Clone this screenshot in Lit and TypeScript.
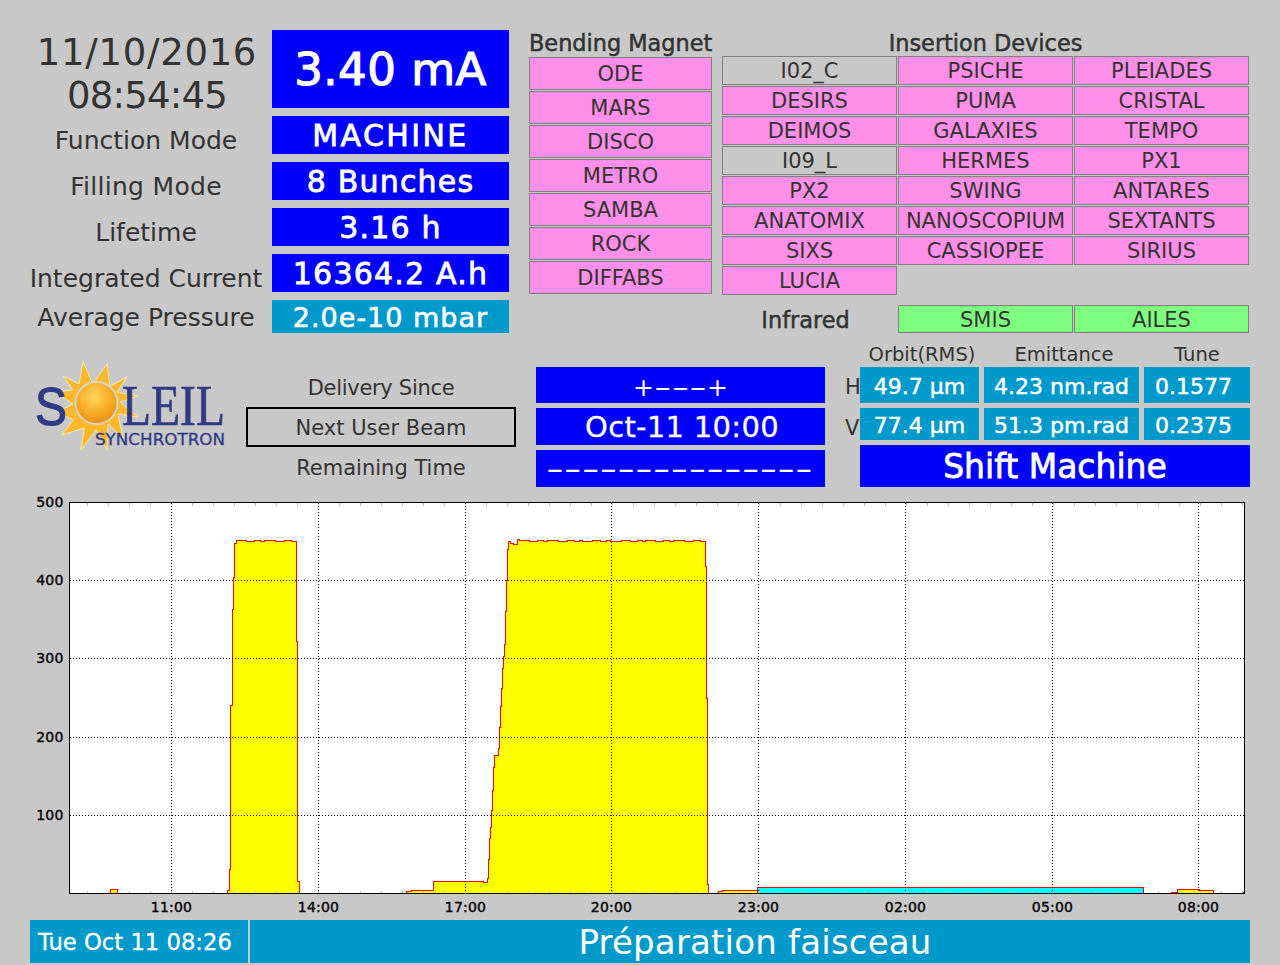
import { LitElement, html, svg, css } from 'lit';
import { customElement } from 'lit/decorators.js';

// Beamline buttons, column by column
const BENDING = ['ODE', 'MARS', 'DISCO', 'METRO', 'SAMBA', 'ROCK', 'DIFFABS'];
const INSERTION = [
  'I02_C', 'PSICHE', 'PLEIADES',
  'DESIRS', 'PUMA', 'CRISTAL',
  'DEIMOS', 'GALAXIES', 'TEMPO',
  'I09_L', 'HERMES', 'PX1',
  'PX2', 'SWING', 'ANTARES',
  'ANATOMIX', 'NANOSCOPIUM', 'SEXTANTS',
  'SIXS', 'CASSIOPEE', 'SIRIUS',
  'LUCIA',
];
const CLOSED = ['I02_C', 'I09_L'];

// Chart geometry, in page pixels
const PLOT = { left: 69.5, right: 1244.5, top: 502.5, bottom: 893.5 };
const Y_TICKS = [
  { label: '500', y: 502 },
  { label: '400', y: 580 },
  { label: '300', y: 658 },
  { label: '200', y: 737 },
  { label: '100', y: 815 },
];
const X_TICKS = [
  { label: '11:00', x: 171.5 },
  { label: '14:00', x: 318.5 },
  { label: '17:00', x: 465.5 },
  { label: '20:00', x: 611.5 },
  { label: '23:00', x: 758.5 },
  { label: '02:00', x: 905.5 },
  { label: '05:00', x: 1052.5 },
  { label: '08:00', x: 1198.5 },
];

// Stepped current trace: [x, y] after each step
type Step = [number, number];

// Full-current plateaus wobble by a pixel
function plateau(from: number, to: number): Step[] {
  const steps: Step[] = [];
  let i = 0;
  for (let x = from; x < to; x += 3 + (i * 7) % 9) {
    steps.push([x, i % 2 === 0 ? 540.5 : 541.5]);
    i++;
  }
  return steps;
}

const YELLOW: Step[][] = [
  [[110.5, 889.5], [117.5, 893.5]],
  [[227.5, 890.5], [229.5, 869.5], [230.5, 705.5], [232.5, 609.5], [233.5, 577.5], [234.5, 543.5],
    ...plateau(236.5, 295), [296.5, 542.5], [296.5, 641.5], [297.5, 881.5], [299.5, 893.5]],
  [[406.5, 891.5], [411.5, 890.5], [433.5, 881.5], [483.5, 882.5], [487.5, 878.5], [488.5, 859.5], [489.5, 838.5],
    [490.5, 827.5], [491.5, 810.5], [492.5, 790.5], [493.5, 767.5], [494.5, 755.5], [498.5, 748.5],
    [499.5, 727.5], [500.5, 706.5], [501.5, 688.5], [502.5, 668.5], [503.5, 656.5], [504.5, 644.5],
    [505.5, 611.5], [506.5, 580.5], [507.5, 549.5], [508.5, 541.5], [510.5, 543.5], [513.5, 544.5],
    [517.5, 539.5], ...plateau(519.5, 705), [705.5, 566.5], [706.5, 698.5], [707.5, 884.5], [708.5, 893.5]],
  [[718.5, 891.5], [722.5, 890.5], [757.5, 893.5]],
  [[1171.5, 892.5], [1177.5, 889.5], [1199.5, 890.5], [1213.5, 893.5]],
  [[1242.5, 892.5], [1244.5, 893.5]],
];
const CYAN: Step[] = [[757.5, 887.5], [1143.5, 893.5]];

// The last step of each trace drops back to the baseline
function tracePoints(steps: Step[]): string {
  const base = PLOT.bottom;
  let pts = `${steps[0][0]},${base}`;
  let y = base;
  for (const [sx, sy] of steps) {
    pts += ` ${sx},${y} ${sx},${sy}`;
    y = sy;
  }
  return pts;
}

const RAYS =
  '83,362 93,384 107,364 110,386 127,377 117,392 138,396 120,402 138,417 118,414 123,438 108,424 107,450 96,430 ' +
  '81,450 84,428 62,435 73,420 58,412 73,404 55,392 73,390 63,376 79,384';

@customElement('app-root')
export class AppRoot extends LitElement {
  static styles = css`
    :host {
      display: block;
      width: 1280px;
      height: 965px;
      background: #c8c8c8;
      color: #333333;
      font-family: 'DejaVu Sans', sans-serif;
      overflow: hidden;
    }

    .top {
      display: flex;
      padding: 30px 0 0 30px;
    }

    .status {
      display: grid;
      grid-template-columns: 232px 237px;
      grid-template-rows: 78px repeat(4, 38px) 33px;
      gap: 8px 10px;
      font-size: 25px;
      text-align: center;
    }

    .clock {
      font-size: 37px;
      line-height: 43px;
      padding: 1px 0 0 2px;
      white-space: nowrap;
    }

    .date {
      display: block;
      letter-spacing: 0.7px;
    }

    .hour {
      display: block;
      letter-spacing: -0.8px;
    }

    .label {
      display: flex;
      align-items: center;
      justify-content: center;
      padding-top: 10px;
      height: 38px;
      box-sizing: border-box;
      white-space: nowrap;
    }

    .label.last {
      padding-top: 2px;
      height: 33px;
    }

    .label.spaced {
      letter-spacing: 0.3px;
    }

    .value {
      display: flex;
      align-items: center;
      justify-content: center;
      background: #0000ff;
      color: #ffffff;
      white-space: nowrap;
    }

    .teal {
      background: #0099cc;
    }

    .current {
      font-size: 45px;
      -webkit-text-stroke: 1.2px #ffffff;
      letter-spacing: 0.5px;
    }

    .big {
      font-size: 30px;
      -webkit-text-stroke: 0.8px #ffffff;
      letter-spacing: 1.2px;
    }

    .big.wide {
      letter-spacing: 2.4px;
    }

    .pressure {
      font-size: 27px;
      -webkit-text-stroke: 0.6px #ffffff;
      letter-spacing: 1px;
      padding-top: 2px;
    }

    .bending {
      width: 183px;
      margin-left: 20px;
      display: flex;
      flex-direction: column;
      gap: 1px;
    }

    .heading {
      font-size: 22.4px;
      -webkit-text-stroke: 0.5px #333333;
      text-align: center;
      line-height: 27px;
      white-space: nowrap;
    }

    .bending .heading {
      height: 26px;
    }

    .bending .beam {
      height: 33px;
    }

    .insertion {
      margin-left: 10px;
      display: grid;
      grid-template-columns: repeat(3, 175px);
      grid-template-rows: 25px repeat(8, 29px) 37px;
      column-gap: 1px;
      row-gap: 1px;
    }

    .insertion .heading {
      grid-column: 1 / 4;
    }

    .infrared {
      font-size: 22.4px;
      -webkit-text-stroke: 0.5px #333333;
      text-align: center;
      padding-right: 8px;
      margin-top: 10px;
      line-height: 28px;
    }

    .insertion .ir {
      margin-top: 9px;
      padding-top: 2px;
    }

    .beam {
      display: flex;
      align-items: center;
      justify-content: center;
      box-sizing: border-box;
      border: 1px solid #808080;
      background: #ff8fe8;
      font-size: 21px;
      white-space: nowrap;
    }

    .beam.closed {
      background: #c8c8c8;
    }

    .beam.ir {
      background: #7fff7f;
    }

    .middle {
      display: flex;
      height: 142px;
      margin-top: 12px;
    }

    .logo {
      display: block;
      width: 246px;
      height: 142px;
      flex: none;
    }

    .delivery {
      width: 270px;
      padding-top: 22px;
      display: grid;
      grid-template-rows: 40px 40px 40px;
      font-size: 21px;
      text-align: center;
      white-space: nowrap;
    }

    .delivery div {
      display: flex;
      align-items: center;
      justify-content: center;
      padding-top: 2px;
    }

    .delivery .since {
      letter-spacing: -0.3px;
    }

    .delivery .boxed {
      box-sizing: border-box;
      border: 2px solid #000000;
    }

    .beam-times {
      width: 289px;
      margin-left: 20px;
      padding-top: 22px;
      display: grid;
      grid-template-rows: 36px 37px 37px;
      row-gap: 5px;
    }

    .time {
      font-size: 29px;
      -webkit-text-stroke: 0.3px #ffffff;
      letter-spacing: 0.3px;
      padding-left: 3px;
    }

    .dashes {
      font-size: 29px;
      padding-right: 3px;
    }

    .dashes span {
      display: inline-block;
      transform: scaleX(1.7);
    }

    .plus-row {
      font-size: 25px;
      padding-top: 4px;
    }

    .plus-row span {
      display: inline-block;
      width: 53px;
      transform: scaleX(1.95);
      text-align: center;
    }

    .orbit {
      margin-left: 20px;
      display: grid;
      grid-template-columns: 10px 119px 155px 106px;
      grid-template-rows: 17px 36px 32px 42px;
      column-gap: 5px;
      row-gap: 5px;
      font-size: 19.5px;
    }

    .orbit .caption {
      text-align: center;
      line-height: 20px;
      white-space: nowrap;
    }

    .orbit .caption.shifted {
      padding-left: 5px;
    }

    .orbit .plane {
      line-height: 40px;
      font-size: 21px;
    }

    .measure {
      font-size: 22px;
      -webkit-text-stroke: 0.5px #ffffff;
      padding-top: 2px;
    }

    .measure.tune {
      justify-content: flex-start;
      padding-left: 11px;
    }

    .shift {
      grid-column: 2 / 5;
      font-size: 33px;
      -webkit-text-stroke: 0.8px #ffffff;
    }

    .chart {
      display: block;
      width: 1280px;
      height: 420px;
      margin-top: 8px;
    }

    .chart text {
      font-size: 14px;
      letter-spacing: 0.2px;
      fill: #000000;
      stroke: #000000;
      stroke-width: 0.35px;
    }

    .footer {
      display: flex;
      gap: 2px;
      height: 43px;
      margin: 5px 30px 0;
    }

    .footer .stamp {
      width: 218px;
      box-sizing: border-box;
      justify-content: flex-start;
      padding-left: 8px;
      font-size: 22.7px;
      -webkit-text-stroke: 0.3px #ffffff;
      background: #0099cc;
    }

    .footer .message {
      flex: 1;
      padding-left: 10px;
      font-size: 34px;
      letter-spacing: 0.2px;
      background: #0099cc;
    }
  `;

  private renderLogo() {
    return html`
      <svg class="logo" viewBox="0 345 246 142">
        <defs>
          <radialGradient id="sun" cx="0.45" cy="0.35" r="0.7">
            <stop offset="0" stop-color="#ffd75a"></stop>
            <stop offset="0.6" stop-color="#f7a823"></stop>
            <stop offset="1" stop-color="#e68a14"></stop>
          </radialGradient>
        </defs>
        <polygon points=${RAYS} fill="#f9b92e" stroke="#fbe6a2" stroke-width="1"></polygon>
        <circle cx="96.5" cy="403" r="21" fill="url(#sun)" stroke="#d6d3c6" stroke-width="2"></circle>
        <text x="35" y="425" font-family="Liberation Sans, sans-serif" font-size="54" fill="#2f3c85" stroke="#2f3c85"
          stroke-width="1.2" textLength="32" lengthAdjust="spacingAndGlyphs">S</text>
        <text x="122" y="425" font-family="Liberation Serif, serif" font-size="56" fill="#2f3c85" stroke="#2f3c85"
          stroke-width="0.7" textLength="103" lengthAdjust="spacingAndGlyphs">LEIL</text>
        <text x="95" y="445" font-family="DejaVu Sans, sans-serif" font-size="16" fill="#2f3c85" stroke="#2f3c85"
          stroke-width="0.3" textLength="130" lengthAdjust="spacingAndGlyphs">SYNCHROTRON</text>
      </svg>
    `;
  }

  private renderChart() {
    const minor: number[] = [];
    for (let x = 87; x < PLOT.right; x += 21) {
      minor.push(x + 0.5);
    }
    return html`
      <svg class="chart" viewBox="0 495 1280 420" shape-rendering="crispEdges">
        <rect x=${PLOT.left} y=${PLOT.top} width=${PLOT.right - PLOT.left} height=${PLOT.bottom - PLOT.top} fill="#ffffff"></rect>
        ${YELLOW.map(
          (steps) => svg`<polygon points=${tracePoints(steps)} fill="#ffff00" stroke="#ff0000" stroke-width="1"></polygon>`
        )}
        <polygon points=${tracePoints(CYAN)} fill="#00ffff" stroke="#ff0000" stroke-width="1"></polygon>
        ${minor.map(
          (x) => svg`
            <line x1=${x} x2=${x} y1=${PLOT.top} y2=${PLOT.top + 3} stroke="#c0c0c0"></line>
            <line x1=${x} x2=${x} y1=${PLOT.bottom - 3} y2=${PLOT.bottom} stroke="#c0c0c0"></line>
          `
        )}
        ${X_TICKS.map(
          (t) => svg`<line x1=${t.x} x2=${t.x} y1=${PLOT.top} y2=${PLOT.bottom} stroke="#000000" stroke-dasharray="1 2"></line>`
        )}
        ${Y_TICKS.slice(1).map(
          (t) => svg`<line x1=${PLOT.left} x2=${PLOT.right} y1=${t.y + 0.5} y2=${t.y + 0.5} stroke="#000000" stroke-dasharray="1 2"></line>`
        )}
        <rect x=${PLOT.left} y=${PLOT.top} width=${PLOT.right - PLOT.left} height=${PLOT.bottom - PLOT.top} fill="none" stroke="#000000"></rect>
        <g shape-rendering="auto">
          ${Y_TICKS.map((t) => svg`<text x="63.5" y=${t.y + 5} text-anchor="end">${t.label}</text>`)}
          ${X_TICKS.map((t) => svg`<text x=${t.x} y="912" text-anchor="middle">${t.label}</text>`)}
        </g>
      </svg>
    `;
  }

  render() {
    return html`
      <div class="top">
        <div class="status">
          <div class="clock"><span class="date">11/10/2016</span><span class="hour">08:54:45</span></div>
          <div class="value current">3.40 mA</div>
          <div class="label">Function Mode</div>
          <div class="value big wide">MACHINE</div>
          <div class="label spaced">Filling Mode</div>
          <div class="value big">8 Bunches</div>
          <div class="label">Lifetime</div>
          <div class="value big">3.16 h</div>
          <div class="label">Integrated Current</div>
          <div class="value big">16364.2 A.h</div>
          <div class="label last">Average Pressure</div>
          <div class="value teal pressure">2.0e-10 mbar</div>
        </div>

        <div class="bending">
          <div class="heading">Bending Magnet</div>
          ${BENDING.map((name) => html`<div class="beam">${name}</div>`)}
        </div>

        <div class="insertion">
          <div class="heading">Insertion Devices</div>
          ${INSERTION.map((name) => html`<div class="beam ${CLOSED.includes(name) ? 'closed' : ''}">${name}</div>`)}
          <div></div>
          <div></div>
          <div class="infrared">Infrared</div>
          <div class="beam ir">SMIS</div>
          <div class="beam ir">AILES</div>
        </div>
      </div>

      <div class="middle">
        ${this.renderLogo()}
        <div class="delivery">
          <div class="since">Delivery Since</div>
          <div class="boxed">Next User Beam</div>
          <div>Remaining Time</div>
        </div>
        <div class="beam-times">
          <div class="value plus-row">+<span>---</span>+</div>
          <div class="value time">Oct-11 10:00</div>
          <div class="value dashes"><span>---------------</span></div>
        </div>
        <div class="orbit">
          <div></div>
          <div class="caption shifted">Orbit(RMS)</div>
          <div class="caption shifted">Emittance</div>
          <div class="caption">Tune</div>
          <div class="plane">H</div>
          <div class="value teal measure">49.7 µm</div>
          <div class="value teal measure">4.23 nm.rad</div>
          <div class="value teal measure tune">0.1577</div>
          <div class="plane">V</div>
          <div class="value teal measure">77.4 µm</div>
          <div class="value teal measure">51.3 pm.rad</div>
          <div class="value teal measure tune">0.2375</div>
          <div class="value shift">Shift Machine</div>
        </div>
      </div>

      ${this.renderChart()}

      <div class="footer">
        <div class="value stamp">Tue Oct 11 08:26</div>
        <div class="value message">Préparation faisceau</div>
      </div>
    `;
  }
}
